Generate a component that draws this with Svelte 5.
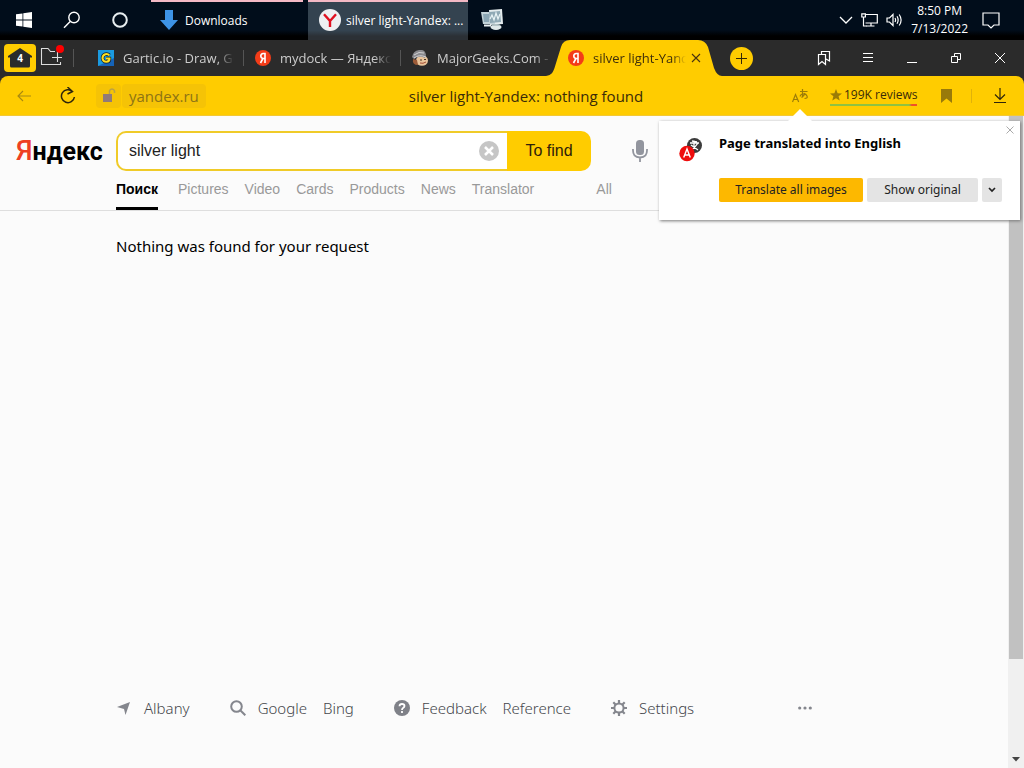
<script>
  let query = $state('silver light');
  let showPopup = $state(true);

  const tabs = [
    { icon: 'gartic', title: 'Gartic.io - Draw, Gu' },
    { icon: 'yandex', title: 'mydock — Яндекс' },
    { icon: 'geek', title: 'MajorGeeks.Com -' },
    { icon: 'yandex', title: 'silver light-Yand', active: true }
  ];

  const services = ['Поиск', 'Pictures', 'Video', 'Cards', 'Products', 'News', 'Translator', 'All'];

  const footer = [
    { icon: 'geo', links: ['Albany'] },
    { icon: 'search', links: ['Google', 'Bing'] },
    { icon: 'help', links: ['Feedback', 'Reference'] },
    { icon: 'gear', links: ['Settings'] }
  ];
</script>

<div class="desktop">
  <header class="taskbar">
    <button class="sys" aria-label="Start">
      <svg width="16" height="16" viewBox="0 0 16 16" fill="#fff"><path d="M0 2.3 6.5 1.4V7.5H0zM7.3 1.3 16 0V7.5H7.3zM0 8.4H6.5V14.6L0 13.7zM7.3 8.4H16V16L7.3 14.7z" /></svg>
    </button>
    <button class="sys" aria-label="Search">
      <svg width="18" height="18" viewBox="0 0 18 18" fill="none" stroke="#fff" stroke-width="1.4"><circle cx="11" cy="6.5" r="5.2" /><path d="M7.2 10.4 1 16.8" /></svg>
    </button>
    <button class="sys" aria-label="Cortana">
      <svg width="16" height="16" viewBox="0 0 16 16" fill="none" stroke="#e8eef0" stroke-width="2"><circle cx="8" cy="8" r="6.8" /></svg>
    </button>
    <button class="task downloads">
      <svg width="18" height="20" viewBox="0 0 18 20"><path d="M5 0H13V10H18L9 20 0 10H5z" fill="#3d93e6" /></svg>
      <span>Downloads</span>
    </button>
    <button class="task current">
      <svg width="22" height="22" viewBox="0 0 22 22"><circle cx="11" cy="11" r="11" fill="#eef0f2" /><path d="M5 5.3 11 12V18M17 5.3 11 12" fill="none" stroke="#e01020" stroke-width="2.4" /></svg>
      <span>silver light-Yandex: ...</span>
    </button>
    <button class="sys" aria-label="Task Manager">
      <svg width="24" height="22" viewBox="0 0 24 22">
        <path d="M9 1 22 0 23 15 10 16z" fill="#e4ecee" />
        <path d="M1 3 14 3 15 15 3 15z" fill="#c3d2d8" />
        <path d="M3 5H9V13H4z" fill="#8ba6b4" />
        <path d="M9 3 20 2 21 13 10 14z" fill="#8fa9b5" />
        <path d="M10 10 12 6 14 11 16 4 18 10 20 5" fill="none" stroke="#e9f4f6" stroke-width="1.2" />
        <ellipse cx="16" cy="18" rx="5.5" ry="3" fill="#dfe8e9" /><path d="M12 16H20" stroke="#8aa0a5" />
        <path d="M4 16.500H11" stroke="#e8eff1" stroke-width="2" />
      </svg>
    </button>
    <div class="tray">
      <svg width="14" height="8" viewBox="0 0 14 8" fill="none" stroke="#fff" stroke-width="1.3"><path d="M1 1 7 7 13 1" /></svg>
      <svg width="17" height="14" viewBox="0 0 17 14" fill="none" stroke="#fff" stroke-width="1.2"><path d="M5 1.5H16.300V10H4.5M10 10V13M5.500 13H13.500" /><path d="M.8.8H4.4V4H.8zM2.5 4V13H6" /></svg>
      <svg width="17" height="14" viewBox="0 0 17 14" fill="none" stroke="#fff" stroke-width="1.2"><path d="M1 5H3.5L7 1.5V12.5L3.5 9H1zM9 5Q10.2 7 9 9M11 3.3Q13.3 7 11 10.7M13.2 1.5Q17 7 13.2 12.5" /></svg>
      <time><span>8:50 PM</span><span>7/13/2022</span></time>
      <svg class="notes" width="18" height="17" viewBox="0 0 18 17" fill="none" stroke="#fff" stroke-width="1.2"><path d="M1 1H17V13H12L9 16 6 13H1z" /></svg>
    </div>
  </header>

  <nav class="tabbar" aria-label="Tabs">
    <button class="home" aria-label="4 tabs">
      <svg width="24" height="20" viewBox="0 0 24 20"><path d="M12 0 24 8V9.5H22V18Q22 19.500 20.500 19.500H3.500Q2 19.500 2 18V9.500H0V8z" fill="#2b2b2b" /></svg>
      <b>4</b>
    </button>
    <button class="folder" aria-label="New group">
      <svg width="24" height="22" viewBox="0 0 24 22" fill="none" stroke="#ddd" stroke-width="1.1"><path d="M15 6.500H10.500L8 3.500H1.500V19.500H20.500V17M17.500 7V17M12 12.500H22" /><circle cx="20" cy="4" r="4" fill="#f00" stroke="none" /></svg>
    </button>
    <div class="tabs">
      {#each tabs as tab}
        <div class="tab" class:active={tab.active}>
          {#if tab.active}
            <svg class="shape" viewBox="0 0 176 36" preserveAspectRatio="none"><path d="M0 36C6 35 7 32 8.500 28L15 7Q17 0 24 0H152Q159 0 162 7L168 28Q171 36 176 36z" fill="#fc0" /></svg>
          {/if}
          {#if tab.icon === 'gartic'}
            <svg class="fav" viewBox="0 0 16 16"><path d="M0 0H16V16H0z" fill="#1b9be0" /><path d="M0 16H16V8z" fill="#1563b8" /><path d="M11.500 5.300Q9.700 3.500 7.300 4.200 4.300 5.300 4.500 8.500 5.200 12 8.500 11.800 11.700 11.500 11.500 8.500H8" fill="none" stroke="#123" stroke-width="3.500" /><path d="M11.300 5.300Q9.700 3.500 7.300 4.200 4.300 5.300 4.500 8.500 5.200 12 8.500 11.800 11.700 11.500 11.500 8.500H8" fill="none" stroke="#ffdf20" stroke-width="2" /></svg>
          {:else if tab.icon === 'geek'}
            <svg class="fav" viewBox="0 0 16 16"><ellipse cx="10" cy="10.500" rx="6" ry="5.300" fill="#e9c49b" /><path d="M0 7Q1 1 7 0T14 5L13 8Q7 5 2 9z" fill="#8a8a8e" /><path d="M2 5Q7 1 12 3M2 8Q7 4 14 7" fill="none" stroke="#d0d0d2" /><path d="M1 9Q0 15 6 15L5 10z" fill="#9c5b38" /><path d="M8 10H10M12 9.500H14" stroke="#432" /><path d="M8 13Q11 14 14 12" fill="none" stroke="#a54e35" /></svg>
          {:else}
            <svg class="fav" viewBox="0 0 16 16"><circle cx="8" cy="8" r="8" fill="#f33c18" /><path d="M10 13V3.500H8.300Q5.800 3.700 5.800 6 5.800 8.300 8.300 8.500H10M7.900 8.500 5.500 13" fill="none" stroke="#fff" stroke-width="1.600" /></svg>
          {/if}
          <span class="title">{tab.title}</span>
          {#if tab.active}
            <button class="close" aria-label="Close tab"><svg width="10" height="10" viewBox="0 0 10 10" stroke="#4a3410" stroke-width="1.1"><path d="M1 1 9 9M9 1 1 9" /></svg></button>
          {/if}
        </div>
      {/each}
    </div>
    <button class="add" aria-label="New tab"><svg width="11" height="11" viewBox="0 0 11 11" stroke="#33280a"><path d="M5.500 0V11M0 5.500H11" /></svg></button>
    <div class="window">
      <button aria-label="Collections"><svg width="14" height="16" viewBox="0 0 14 16" fill="none" stroke="#fff" stroke-width="1.2"><path d="M1.500 4.500H8.500V14.500L5 11.500 1.500 14.500zM4.500 4V1.500H12.500V11L9 9" /></svg></button>
      <button aria-label="Menu"><svg width="12" height="10" viewBox="0 0 12 10" stroke="#fff"><path d="M1 .500H11M1 4.500H11M1 8.500H11" /></svg></button>
      <button aria-label="Minimize"><svg width="10" height="10" viewBox="0 0 10 10" stroke="#fff"><path d="M0 9.500H10" /></svg></button>
      <button aria-label="Restore"><svg width="10" height="10" viewBox="0 0 10 10" fill="none" stroke="#fff"><path d="M.500 3.500H6.500V9.500H.500zM3.500 3.500V.500H9.500V6.500H6.500" /></svg></button>
      <button aria-label="Close"><svg width="12" height="12" viewBox="0 0 12 12" stroke="#fff"><path d="M1 1 11 11M11 1 1 11" /></svg></button>
    </div>
  </nav>

  <div class="corner">
    <div class="toolbar">
      <div class="left">
        <button aria-label="Back"><svg width="14" height="12" viewBox="0 0 14 12" fill="none" stroke="#a88912" stroke-width="1.1"><path d="M14 6H1M6 1 1 6 6 11" /></svg></button>
        <button aria-label="Reload"><svg width="16" height="18" viewBox="0 0 16 18" fill="none" stroke="#2e250b" stroke-width="1.500"><path d="M12.500 4.500A6.500 6.500 0 1 0 14.400 10M7.500 0 12.500 4.500 7.500 7" /></svg></button>
        <div class="address">
          <span class="lock"><svg width="14" height="15" viewBox="0 0 14 15"><path d="M1 6H10V14H1z" fill="#917a78" /><path d="M7.500 6V3Q8 1 10 1T12.500 3V5" fill="none" stroke="#b8a04a" stroke-width="1.500" /></svg></span>
          <a href="#yandex">yandex.ru</a>
        </div>
      </div>
      <h1>silver light-Yandex: nothing found</h1>
      <div class="right">
        <button aria-label="Translate page"><svg width="16" height="16" viewBox="0 0 16 16" fill="none" stroke="#9c7c08" stroke-width="1.200"><path d="M.500 14 3.500 6.500 6.700 14M1.500 11.500H5.500M8 3.500H15.500M10.500 1V9.500M8.300 8.500Q8 6.500 11 6T15 8 12.500 10.500M13 5Q12 8.500 9.500 9.500" /></svg></button>
        <a class="reviews" href="#reviews">
          <svg width="12" height="12" viewBox="0 0 12 12"><path d="M6 0 7.600 4.200 12 4.500 8.600 7.300 9.700 11.500 6 9.200 2.300 11.500 3.400 7.300 0 4.500 4.400 4.200z" fill="#9b7c06" /></svg>
          <span>199K reviews</span>
        </a>
        <button class="mark" aria-label="Bookmark"><svg width="11" height="14" viewBox="0 0 11 14"><path d="M0 0H11V14L5.500 9.500 0 14z" fill="#997a0a" /></svg></button>
        <i></i>
        <button class="save" aria-label="Downloads"><svg width="12" height="16" viewBox="0 0 12 16" fill="none" stroke="#2e250b" stroke-width="1.200"><path d="M6 0V11.500M1 6.500 6 11.500 11 6.500M0 14.500H12" /></svg></button>
      </div>
    </div>
  </div>

  <main>
    <div class="page">
      <div class="head">
        <a class="logo" href="#home"><span>Я</span>ндекс</a>
        <form onsubmit={(e) => e.preventDefault()}>
          <div class="field">
            <input type="text" aria-label="Search query" bind:value={query} />
            <button type="button" class="clear" aria-label="Clear" onclick={() => (query = '')}>
              <svg width="20" height="20" viewBox="0 0 20 20"><circle cx="10" cy="10" r="10" fill="#c6c6c6" /><path d="M6 6 14 14M14 6 6 14" stroke="#fff" stroke-width="2.500" /></svg>
            </button>
          </div>
          <button class="find">To find</button>
        </form>
        <button class="mic" aria-label="Voice search">
          <svg width="16" height="22" viewBox="0 0 16 22"><rect x="4" width="8" height="15" rx="3.500" fill="#92959e" /><path d="M1 9Q0.500 17.500 8 17.500T15 9M8 17V22" fill="none" stroke="#92959e" stroke-width="1.800" /></svg>
        </button>
      </div>
      <nav class="services">
        {#each services as name, i}
          <a href="#{i}" class:selected={i === 0} class:all={name === 'All'}>{name}</a>
        {/each}
      </nav>
      <p>Nothing was found for your request</p>
      <footer>
        {#each footer as group}
          <div class="group">
            {#if group.icon === 'geo'}
              <svg width="16" height="16" viewBox="0 0 16 16"><path d="M1 7 14 2 9.500 15 8 9z" fill="#84868d" /></svg>
            {:else if group.icon === 'search'}
              <svg width="16" height="16" viewBox="0 0 16 16" fill="none" stroke="#84868d" stroke-width="2"><circle cx="6.500" cy="6.500" r="5.300" /><path d="M10.500 10.500 15.300 15.300" /></svg>
            {:else if group.icon === 'help'}
              <svg width="16" height="16" viewBox="0 0 16 16"><circle cx="8" cy="8" r="8" fill="#7f8188" /><path d="M5.500 6.200Q5.600 4 8 4T10.500 6Q10.500 7 9 8 8 8.600 8 10M8 11V13" fill="none" stroke="#fff" stroke-width="1.800" /></svg>
            {:else}
              <svg width="16" height="16" viewBox="0 0 16 16" fill="none" stroke="#84868d"><circle cx="8" cy="8" r="4.600" stroke-width="2" /><path d="M8 0V3M8 13V16M0 8H3M13 8H16M2.300 2.300 4.500 4.500M11.500 11.500 13.700 13.700M2.300 13.700 4.500 11.500M11.500 4.500 13.700 2.300" stroke-width="2.200" /></svg>
            {/if}
            {#each group.links as link}
              <a href="#{link}">{link}</a>
            {/each}
          </div>
        {/each}
        <button class="more" aria-label="More"><svg width="14" height="4" viewBox="0 0 14 4" fill="#84868d"><circle cx="1.700" cy="2" r="1.600" /><circle cx="7" cy="2" r="1.600" /><circle cx="12.300" cy="2" r="1.600" /></svg></button>
      </footer>
    </div>
    <div class="scroll">
      <div class="thumb"></div>
      <svg width="8" height="5" viewBox="0 0 8 5"><path d="M0 0H8L4 4.500z" fill="#444" /></svg>
    </div>

    {#if showPopup}
      <section class="popup">
        <svg class="lang" width="24" height="24" viewBox="0 0 24 24"><circle cx="15.500" cy="7.500" r="7.500" fill="#3c3c3c" /><path d="M11 5H20M15 2.500V10M19 5Q16 10 12 12M12 7 19 12M13 3 18 4" fill="none" stroke="#fff" stroke-width="1.300" /><circle cx="8" cy="15.500" r="7.700" fill="#ee0c0c" /><path d="M4.700 19.500 8 11 11.300 19.500M5.800 17H10.200" fill="none" stroke="#fff" stroke-width="1.400" /></svg>
        <div class="body">
          <h2>Page translated into English</h2>
          <div class="actions">
            <button class="primary">Translate all images</button>
            <button>Show original</button>
            <button class="drop" aria-label="Options"><svg width="8" height="6" viewBox="0 0 8 6" fill="none" stroke="#222" stroke-width="1.700"><path d="M1 1 4 4 7 1" /></svg></button>
          </div>
        </div>
        <button class="dismiss" aria-label="Dismiss" onclick={() => (showPopup = false)}><svg width="8" height="8" viewBox="0 0 8 8" stroke="#aaa"><path d="M.500.500 7.500 7.500M7.500.500.500 7.500" /></svg></button>
      </section>
    {/if}
  </main>
</div>

<style>
  :global(body) {
    margin: 0;
  }

  .desktop {
    display: flex;
    flex-direction: column;
    min-height: 100vh;
    font-family: "Open Sans", "Noto Sans", sans-serif;
    font-size: 12px;
    color: #222;
    background: #fbfbfb;
  }

  button {
    display: flex;
    align-items: center;
    justify-content: center;
    padding: 0;
    border: 0;
    background: none;
    font: inherit;
    color: inherit;
    flex-shrink: 0;
  }

  a {
    color: inherit;
    text-decoration: none;
  }

  svg {
    flex-shrink: 0;
  }

  /* taskbar */
  .taskbar {
    display: flex;
    height: 40px;
    background: linear-gradient(#010d1b 75%, #000 90%);
    color: #fff;
  }

  .sys {
    width: 48px;
  }

  .task {
    justify-content: flex-start;
    box-sizing: border-box;
    border-top: 2px solid #f3b8c4;
    padding-bottom: 2px;
  }

  .downloads {
    width: 152px;
    margin: 0 5px 0 7px;
    padding-left: 9px;
    gap: 7px;
  }

  .current {
    width: 160px;
    padding-left: 11px;
    gap: 5px;
    background: linear-gradient(#344350 75%, #2b3035 90%);
  }

  .tray {
    display: flex;
    align-items: center;
    gap: 8px;
    margin-left: auto;
    padding-right: 24px;
  }

  time {
    display: flex;
    flex-direction: column;
    align-items: center;
    line-height: 18px;
  }

  .notes {
    margin-left: 6px;
  }

  /* browser tabs */
  .tabbar {
    display: flex;
    align-items: center;
    height: 36px;
    padding: 0 2px 0 4px;
    background: #2b2b2b;
    color: #ccc;
    font-size: 13px;
  }

  .home {
    display: grid;
    place-items: center;
    width: 32px;
    height: 28px;
    border-radius: 4px;
    background: #fc0;
  }

  .home svg,
  .home b {
    grid-area: 1 / 1;
  }

  .home b {
    color: #fff;
    font-size: 10px;
    line-height: 12px;
  }

  .folder {
    width: 38px;
    height: 18px;
    padding: 0 9px 4px 4px;
    box-sizing: border-box;
    border-right: 1px solid #555;
  }

  .tabs {
    display: flex;
    height: 36px;
    margin-left: 13px;
  }

  .tab {
    position: relative;
    display: flex;
    align-items: center;
    width: 157px;
    box-sizing: border-box;
    padding: 0 10px 0 11px;
    gap: 9px;
  }

  .tab:nth-child(-n + 2)::after {
    content: '';
    position: absolute;
    right: 0;
    height: 16px;
    border-right: 1px solid #555;
  }

  .tab:nth-child(3) {
    padding-right: 6px;
  }

  .tab.active {
    padding: 0 14px 0 10px;
    color: #40300a;
  }

  .shape {
    position: absolute;
    left: -12px;
    width: 176px;
    height: 36px;
  }

  .fav {
    position: relative;
    width: 16px;
    height: 16px;
  }

  .title {
    position: relative;
    flex: 1;
    min-width: 0;
    overflow: hidden;
    white-space: nowrap;
    mask-image: linear-gradient(to right, #000 85%, transparent);
  }

  .close {
    position: relative;
    width: 10px;
  }

  .active .title {
    margin-right: -4px;
  }

  .add {
    width: 23px;
    height: 23px;
    margin-left: 15px;
    border-radius: 50%;
    background: #fc0;
  }

  .window {
    display: flex;
    margin-left: auto;
  }

  .window button {
    width: 44px;
    height: 36px;
  }

  /* toolbar */
  .corner {
    background: #2b2b2b;
  }

  .toolbar {
    display: grid;
    grid-template-columns: 270px 1fr 242px;
    align-items: center;
    height: 39px;
    border-bottom: 1px solid #f2c836;
    border-radius: 8px 8px 0 0;
    background: #fc0;
  }

  .left,
  .right,
  .address {
    display: flex;
    align-items: center;
  }

  .left > button {
    width: 44px;
    height: 32px;
  }

  .left {
    padding-left: 2px;
  }

  .address {
    margin-left: 6px;
    gap: 1px;
    color: #8d7315;
    font-size: 15px;
    line-height: 24px;
  }

  .lock,
  .address a {
    display: flex;
    align-items: center;
    height: 24px;
    border-radius: 4px;
    background: #f5c306;
  }

  .lock {
    width: 25px;
    justify-content: center;
  }

  .address a {
    padding: 0 7px;
  }

  h1 {
    margin: 0;
    text-align: center;
    white-space: nowrap;
    font-size: 15px;
    font-weight: 400;
    color: #3a2b08;
  }

  .right {
    padding: 0 18px 0 10px;
  }

  .reviews {
    display: flex;
    align-items: center;
    gap: 2px;
    margin-left: 22px;
    border-bottom: 2px solid;
    border-image: linear-gradient(to right, #8fc241 90%, #f0502a 93%) 1;
    line-height: 18px;
    font-size: 12px;
    color: #3a2b08;
    white-space: nowrap;
  }

  .mark {
    margin-left: auto;
  }

  .right i {
    height: 14px;
    margin: 0 22px 0 19px;
    border-left: 1px solid #e0b20a;
  }

  /* search page */
  main {
    position: relative;
    display: flex;
    flex: 1;
    font-family: "Liberation Sans", Arial, sans-serif;
  }

  .page {
    display: flex;
    flex-direction: column;
    flex: 1;
  }

  .head {
    display: flex;
    align-items: center;
    padding: 15px 0 0 16px;
  }

  .logo {
    width: 100px;
    font: 700 25px/36px Roboto, sans-serif;
    color: #000;
  }

  .logo span {
    color: #ee4023;
    font-size: 27px;
    font-weight: 500;
  }

  form {
    display: flex;
    width: 475px;
    height: 40px;
    font-size: 16px;
  }

  .field {
    display: flex;
    flex: 1;
    padding: 0 8px 0 11px;
    border: 2px solid #f0cb28;
    border-right: 0;
    border-radius: 10px 0 0 10px;
    background: #fff;
  }

  input {
    flex: 1;
    min-width: 0;
    padding: 0;
    border: 0;
    outline: 0;
    background: none;
    font: inherit;
    color: #222;
  }

  .find {
    width: 84px;
    border-radius: 0 10px 10px 0;
    background: #fc0;
    color: #2e210a;
  }

  .mic {
    margin-left: 41px;
  }

  .services {
    display: flex;
    gap: 16px;
    height: 39px;
    padding-left: 116px;
    border-bottom: 1px solid #dedede;
    font-size: 14px;
    line-height: 36px;
    color: #999;
  }

  .services .selected {
    margin-right: 4px;
    height: 36px;
    border-bottom: 3px solid #000;
    font-weight: 700;
    color: #000;
  }

  .services .all {
    margin-left: 46px;
  }

  p {
    margin: 23px 0 0 116px;
    font: 15px/24px "Noto Sans", sans-serif;
    color: #000;
  }

  footer {
    display: flex;
    align-items: center;
    gap: 40px;
    margin-top: auto;
    padding: 0 0 48px 116px;
    font: 300 15px/24px "Noto Sans", "Open Sans", sans-serif;
    color: #45474c;
  }

  .group {
    display: flex;
    align-items: center;
    gap: 12px;
  }

  .group a + a {
    margin-left: 4px;
  }

  .more {
    margin-left: 64px;
  }

  .scroll {
    display: flex;
    flex-direction: column;
    align-items: center;
    justify-content: space-between;
    width: 16px;
    padding-bottom: 6px;
    background: #f0f0f0;
  }

  .thumb {
    width: 14px;
    height: 84%;
    background: #c1c1c1;
  }

  /* translation popup */
  .popup {
    position: absolute;
    top: 5px;
    right: 4px;
    display: flex;
    gap: 16px;
    box-sizing: border-box;
    padding: 13px 18px 18px 20px;
    background: #fff;
    box-shadow: 1px 1px 3px #777;
    font: 13px/18px "Noto Sans", "Open Sans", sans-serif;
  }

  .popup::before {
    content: '';
    position: absolute;
    top: -12px;
    left: 129px;
    border: 12px solid transparent;
    border-top: 0;
    border-bottom-color: #fff;
  }

  .lang {
    margin-top: 4px;
  }

  h2 {
    margin: 0 0 26px;
    font-size: 13px;
    line-height: 18px;
    color: #000;
  }

  .actions {
    display: flex;
    gap: 4px;
  }

  .actions button {
    height: 24px;
    width: 111px;
    border-radius: 2px;
    background: #e4e4e4;
    font-size: 12px;
  }

  .actions .primary {
    width: 144px;
    background: #fdb800;
  }

  .actions .drop {
    width: 20px;
  }

  .dismiss {
    position: absolute;
    top: 5px;
    right: 6px;
  }
</style>
